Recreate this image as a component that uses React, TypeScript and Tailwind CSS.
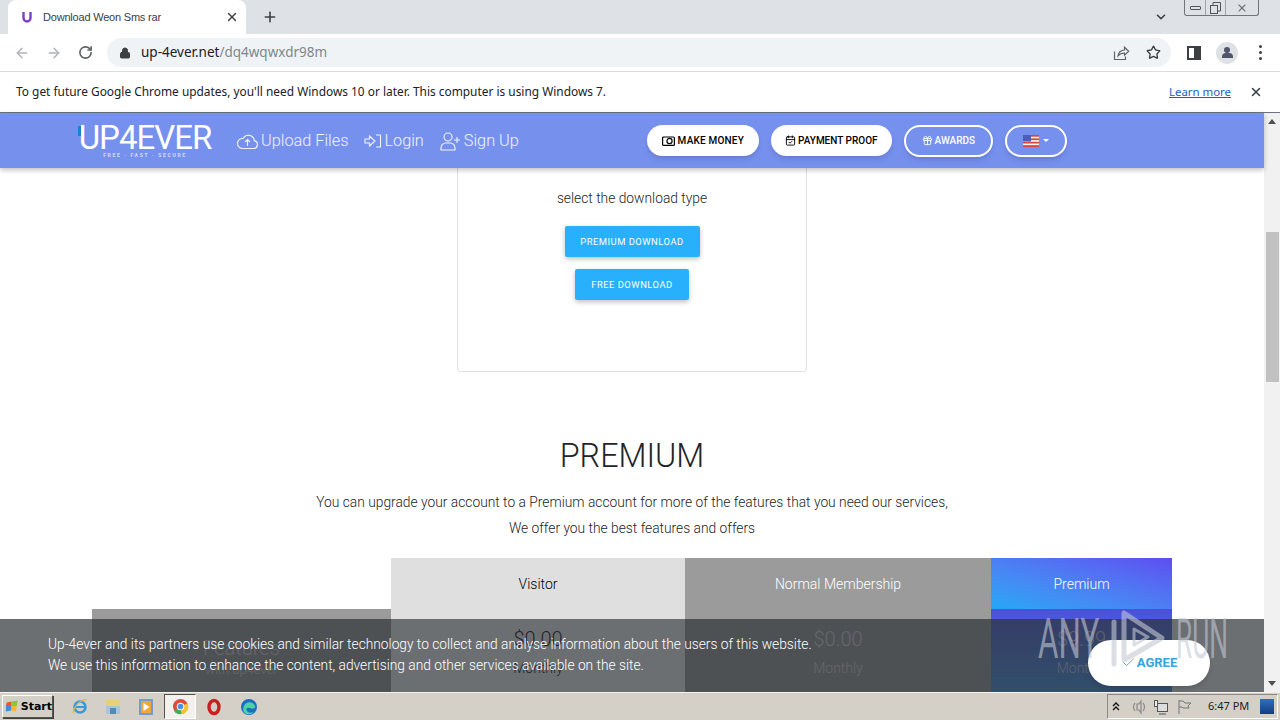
import {
  ArrowLeft,
  ArrowRight,
  RotateCw,
  Lock,
  Star,
  X,
  Plus,
  ChevronDown,
  CalendarCheck,
  Gift,
  Check,
} from "lucide-react";

const roboto = { fontFamily: "Roboto, Arial, sans-serif" };
const uiFont = { fontFamily: "'Noto Sans', sans-serif" };

function Flag() {
  return (
    <svg width="16" height="12" viewBox="0 0 16 12">
      <rect width="16" height="12" fill="#f3f3f3" />
      <rect y="0" width="16" height="1.7" fill="#d8443c" />
      <rect y="3.4" width="16" height="1.7" fill="#d8443c" />
      <rect y="6.8" width="16" height="1.7" fill="#d8443c" />
      <rect y="10.2" width="16" height="1.8" fill="#d8443c" />
      <rect width="8" height="6.5" fill="#4a5fb5" />
    </svg>
  );
}

function Browser() {
  return (
    <>
      {/* tab strip */}
      <div className="h-[34px] bg-[#dee1e6] flex items-end shrink-0">
        <div className="ml-[8px] w-[238px] h-[34px] bg-white rounded-t-lg flex items-center pl-[13px] pr-[7px]">
          <svg width="12" height="14" viewBox="0 0 12 14" fill="none">
            <path d="M2.5 2v6a3.5 3.5 0 0 0 7 0V2" stroke="#7b3fc4" strokeWidth="2.4" />
          </svg>
          <span className="ml-[10px] flex-1 text-[11px] tracking-[-0.2px] text-[#3c4043] leading-none" style={{ fontFamily: "'Liberation Sans', sans-serif" }}>
            Download Weon Sms rar
          </span>
          <X className="w-[14px] h-[14px] text-[#3c4043]" strokeWidth={2.4} />
        </div>
        <Plus className="ml-[16px] mb-[9px] w-[16px] h-[16px] text-[#3c4043]" strokeWidth={2.4} />
        <div className="flex-1" />
        <ChevronDown className="mb-[10px] mr-[16px] w-[14px] h-[14px] text-[#3c4043]" strokeWidth={2.8} />
        <div className="self-start mr-[21px] w-[75px] h-[16px] border border-t-0 border-[#70757c] rounded-b-[3px] flex items-center">
          <div className="w-[21px] flex justify-center border-r border-[#a0a4aa] h-full items-center">
            <div className="w-[11px] h-[4px] border border-[#50555c] rounded-[1px]" />
          </div>
          <div className="w-[20px] flex justify-center border-r border-[#a0a4aa] h-full items-center">
            <svg width="11" height="12" viewBox="0 0 11 12" fill="none" stroke="#50555c">
              <rect x="0.5" y="3.5" width="7" height="8" />
              <path d="M3 3V.5h7.5V9H8" />
            </svg>
          </div>
          <X className="ml-[10px] w-[12px] h-[12px] text-[#70757c]" strokeWidth={2.2} />
        </div>
      </div>

      {/* toolbar */}
      <div className="h-[38px] bg-white border-b border-[#dadce0] flex items-center shrink-0">
        <ArrowLeft className="ml-[14px] w-[16px] h-[16px] text-[#b0b3b8]" strokeWidth={2.2} />
        <ArrowRight className="ml-[16px] w-[16px] h-[16px] text-[#b0b3b8]" strokeWidth={2.2} />
        <RotateCw className="ml-[16px] w-[15px] h-[15px] text-[#5f6368]" strokeWidth={2.6} />
        <div className="ml-[14px] w-[1064px] h-[29px] bg-[#f0f3f6] rounded-full flex items-center pl-[12px] pr-[10px]">
          <Lock className="w-[12px] h-[12px] text-[#3c4043] fill-[#3c4043]" />
          <span className="ml-[10px] flex-1 text-[13.5px] text-[#80868b] leading-none" style={uiFont}>
            <span className="text-[#202124]">up-4ever.net</span>/dq4wqwxdr98m
          </span>
          <svg width="17" height="16" viewBox="0 0 17 16" fill="none" stroke="#5f6368" strokeWidth="1.2">
            <path d="M1.5 6.5v8h11v-3" />
            <path d="M5 11c0-3.5 3-6 6.5-6V2.2l4.2 4-4.2 4V8C8.500 8 6.500 9 5 11z" />
          </svg>
          <Star className="ml-[16px] w-[15px] h-[15px] text-[#3c4043]" strokeWidth={2.2} />
        </div>
        <div className="ml-[16px] w-[14px] h-[14px] border-2 border-[#3c4043] border-r-[7px]" />
        <div className="ml-[15px] w-[22px] h-[22px] rounded-full bg-[#dfe1e5] flex flex-col items-center justify-center">
          <div className="w-[6px] h-[6px] rounded-full bg-[#50566a]" />
          <div className="w-[11px] h-[5px] rounded-t-[4px] bg-[#50566a]" />
        </div>
        <div className="ml-[21px] flex flex-col gap-[3px]">
          <div className="w-[3px] h-[3px] rounded-full bg-[#3c4043]" />
          <div className="w-[3px] h-[3px] rounded-full bg-[#3c4043]" />
          <div className="w-[3px] h-[3px] rounded-full bg-[#3c4043]" />
        </div>
      </div>

      {/* infobar */}
      <div className="h-[41px] bg-white border-b border-[#6b7280] flex items-center pl-[16px] pr-[17px] shrink-0">
        <span className="flex-1 text-[11.9px] text-[#202124]" style={uiFont}>
          To get future Google Chrome updates, you'll need Windows 10 or later. This computer is using Windows 7.
        </span>
        <span className="text-[11.4px] text-[#1a62c9] underline" style={uiFont}>
          Learn more
        </span>
        <X className="ml-[18px] w-[14px] h-[14px] text-[#3c4043]" strokeWidth={2.6} />
      </div>
    </>
  );
}

function NavBar() {
  return (
    <div className="relative z-10 h-[55px] bg-[#7690ee] shadow-[0_2px_5px_rgba(0,0,0,0.25)] flex items-center pl-[78px] text-white shrink-0" style={roboto}>
      <div className="relative w-[134px] flex flex-col items-center">
        <span className="absolute left-0 top-[2px] w-[3px] h-[10px] bg-[#1f7fd0]" />
        <span className="text-[33px] font-normal leading-[28px] tracking-[-1px] whitespace-nowrap">UP4EVER</span>
        <span className="text-[5px] font-bold leading-[6px] tracking-[1.7px] text-white/70 whitespace-nowrap">FREE · FAST · SECURE</span>
      </div>
      <div className="ml-[25px] pt-[1px] flex items-center text-[16.3px] font-light text-white/90">
        <span className="flex items-center gap-[3px]">
          <svg width="21" height="18" viewBox="0 0 21 18" fill="none" stroke="currentColor" strokeWidth="1.1">
            <path d="M5 16.500h11.500a4 4 0 0 0 .8-7.900A6 6 0 0 0 6 6.500a5 5 0 0 0-1 10z" />
            <path d="M10.500 14V8M8 10l2.500-2.500L13 10" />
          </svg>
          Upload Files
        </span>
        <span className="ml-[16px] flex items-center gap-[2px]">
          <svg width="18" height="16" viewBox="0 0 18 16" fill="none" stroke="currentColor" strokeWidth="1.1">
            <path d="M1 6h4.500V3l5.500 5-5.500 5v-3H1z" />
            <path d="M12 2h4.500v12H12" />
          </svg>
          Login
        </span>
        <span className="ml-[16px] flex items-center gap-[3px]">
          <svg width="21" height="19" viewBox="0 0 21 19" fill="none" stroke="currentColor" strokeWidth="1.1">
            <circle cx="8" cy="5" r="4" />
            <path d="M1 18v-2a5 5 0 0 1 5-5h4a5 5 0 0 1 5 5v2z" />
            <path d="M17 5v6M14 8h6" />
          </svg>
          Sign Up
        </span>
      </div>
      <div className="ml-[128px] flex items-center gap-[12px] text-[10px] font-medium">
        <span className="h-[31px] w-[112px] rounded-full bg-white text-black flex items-center justify-center gap-[3px] shadow-md tracking-[0.2px]">
          <svg width="13" height="11" viewBox="0 0 13 11" fill="none" stroke="currentColor" strokeWidth="1.2">
            <rect x="0.6" y="2" width="11.800" height="8.400" rx="1" />
            <circle cx="7.500" cy="6" r="2.600" />
          </svg>
          MAKE MONEY
        </span>
        <span className="h-[31px] w-[121px] rounded-full bg-white text-black flex items-center justify-center gap-[2px] shadow-md">
          <CalendarCheck className="w-[11px] h-[11px]" />
          PAYMENT PROOF
        </span>
        <span className="h-[32px] w-[89px] rounded-full border-2 border-white text-white flex items-center justify-center gap-[2px] shadow-md">
          <Gift className="w-[11px] h-[11px]" />
          AWARDS
        </span>
        <span className="h-[32px] w-[62px] rounded-full border-2 border-white flex items-center justify-center gap-[4px] shadow-md">
          <Flag />
          <span className="w-0 h-0 border-x-[3px] border-x-transparent border-t-[3px] border-t-white" />
        </span>
      </div>
    </div>
  );
}

function PageBody() {
  return (
    <div className="flex-1 bg-white text-[#212529] overflow-hidden" style={roboto}>
      <div className="ml-[457px] w-[350px] h-[204px] border border-t-0 border-[#e0e0e0] rounded-b-[4px] flex flex-col items-center pt-[21px]">
        <p className="text-[13.8px] font-light leading-[18px]">select the download type</p>
        <button className="mt-[19px] w-[135px] h-[31px] pt-[1px] bg-[#29b0fc] text-white text-[9.4px] tracking-[0.5px] rounded-[2px] shadow-[0_2px_5px_rgba(0,0,0,0.25)]">
          PREMIUM DOWNLOAD
        </button>
        <button className="mt-[12px] w-[114px] h-[31px] pt-[1px] bg-[#29b0fc] text-white text-[9.4px] tracking-[0.5px] rounded-[2px] shadow-[0_2px_5px_rgba(0,0,0,0.25)]">
          FREE DOWNLOAD
        </button>
      </div>

      <h2 className="mt-[62px] text-center text-[32.3px] font-light leading-[44px]">PREMIUM</h2>
      <p className="mt-[11px] text-center text-[13.8px] font-light leading-[26px]">
        You can upgrade your account to a Premium account for more of the features that you need our services,
        <br />
        We offer you the best features and offers
      </p>

      <div className="mt-[17px] ml-[92px] w-[1080px] grid grid-cols-[299px_294px_306px_181px] h-[134px] text-[14px]">
        <div className="mt-[51px] bg-[#9b9b9b] text-center text-white/70 pt-[27px]">
          <div className="text-[20px] font-light leading-[24px]">Features</div>
          <div className="text-[13px] font-light">with up4ever</div>
        </div>
        <div className="text-center">
          <div className="h-[61px] pb-[8px] bg-[#dfdfdf] flex items-center justify-center text-black font-light">Visitor</div>
          <div className="pt-[8px] text-[20px] font-light leading-[24px] text-black">$0.00</div>
          <div className="pt-[7px] text-[14px] font-light text-black">Monthly</div>
        </div>
        <div className="text-center">
          <div className="h-[51px] pt-[2px] bg-[#9b9b9b] flex items-center justify-center text-white font-light">Normal Membership</div>
          <div className="h-[83px] bg-[#9b9b9b] text-white/70 font-light">
            <div className="pt-[18px] text-[20px] leading-[24px]">$0.00</div>
            <div className="pt-[7px] text-[14px]">Monthly</div>
          </div>
        </div>
        <div className="text-center">
          <div className="h-[51px] pt-[2px] bg-gradient-to-tr from-[#21a8f5] to-[#5c4df0] flex items-center justify-center text-white font-light">
            Premium
          </div>
          <div className="h-[83px] bg-gradient-to-b from-[#4a50d8] to-[#3a92e8] text-white/70 font-light">
            <div className="pt-[18px] text-[20px] leading-[24px]">$9.99</div>
            <div className="pt-[7px] text-[14px]">Monthly</div>
          </div>
        </div>
      </div>
    </div>
  );
}

function CookieBar() {
  return (
    <div className="absolute left-0 bottom-0 z-20 w-[1264px] h-[73px] bg-[rgba(45,50,54,0.7)] text-white font-light text-[13.75px] leading-[21px] pl-[48px] pt-[15px]" style={roboto}>
      <p>Up-4ever and its partners use cookies and similar technology to collect and analyse information about the users of this website.</p>
      <p>We use this information to enhance the content, advertising and other services available on the site.</p>
      <button className="absolute left-[1088px] top-[21px] w-[122px] h-[46px] rounded-full bg-white shadow-md flex items-center justify-center gap-[1px] text-[#35a5e0] text-[13px] font-bold pb-[2px]">
        <Check className="w-[15px] h-[15px]" strokeWidth={1.4} />
        AGREE
      </button>
    </div>
  );
}

function Watermark() {
  return (
    <div className="absolute left-[1038px] top-[497px] z-30 h-[58px] flex items-center text-[rgba(195,200,212,0.6)] text-[56px] leading-[58px] font-normal" style={roboto}>
      <span className="w-[70px] whitespace-nowrap scale-x-[0.56] origin-left">ANY</span>
      <svg className="ml-[2px]" width="56" height="58" viewBox="0 0 56 58" fill="none" stroke="currentColor" strokeWidth="5" strokeLinejoin="round" strokeLinecap="round">
        <path d="M4 12v42" />
        <path d="M14 3v47l38-22z" />
        <path d="M24 19v16l14-8z" strokeWidth="3" />
      </svg>
      <span className="ml-[10px] w-[56px] whitespace-nowrap scale-x-[0.47] origin-left">RUN</span>
    </div>
  );
}

function Scrollbar() {
  return (
    <div className="w-[16px] bg-[#f1f1f1] flex flex-col items-center shrink-0">
      <span className="mt-[6px] w-0 h-0 border-x-[4px] border-x-transparent border-b-[5px] border-b-[#505050]" />
      <div className="mt-[108px] w-[13px] h-[150px] bg-[#c1c1c1]" />
      <div className="flex-1" />
      <span className="mb-[6px] w-0 h-0 border-x-[4px] border-x-transparent border-t-[5px] border-t-[#505050]" />
    </div>
  );
}

function Taskbar() {
  return (
    <div className="h-[28px] bg-[#d4d0c8] border-t border-[#f4f2ee] flex items-center shrink-0">
      <div className="ml-[2px] w-[51px] h-[23px] border border-[#55524c] border-l-white border-t-white bg-[#d4d0c8] flex items-center pl-[2px] gap-[2px] shadow-[1px_1px_0_#404040]">
        <svg width="15" height="15" viewBox="0 0 15 15">
          <path d="M2 3l5-1v5H1z" fill="#e8562a" />
          <path d="M7 2l7-1-1 6H7z" fill="#8cc63f" />
          <path d="M1 7h6v5l-6 1z" fill="#3a8fe0" />
          <path d="M7 7h6l-1 6-5-1z" fill="#f5b82e" />
        </svg>
        <span className="text-[11px] font-bold text-black leading-none" style={{ fontFamily: "'DejaVu Sans', sans-serif" }}>
          Start
        </span>
      </div>
      {/* IE */}
      <svg className="ml-[18px]" width="18" height="18" viewBox="0 0 18 18" fill="none">
        <circle cx="9" cy="9" r="5.500" stroke="#3a9ad9" strokeWidth="2.600" />
        <path d="M4 9h10" stroke="#3a9ad9" strokeWidth="2" />
        <path d="M2 15C4 6 12 0 16 2" stroke="#e5b83a" strokeWidth="1.200" />
      </svg>
      {/* explorer */}
      <svg className="ml-[16px]" width="16" height="18" viewBox="0 0 16 18">
        <rect x="1" y="2" width="14" height="14" fill="#e8cf7a" />
        <rect x="1" y="8" width="14" height="8" fill="#a9c6d8" />
        <rect x="5" y="10" width="6" height="6" fill="#4f8db8" />
      </svg>
      {/* media player */}
      <svg className="ml-[17px]" width="16" height="18" viewBox="0 0 16 18">
        <rect x="1" y="1" width="14" height="16" fill="#6e9ecf" />
        <rect x="3" y="3" width="10" height="12" fill="#f0a83a" />
        <path d="M5.500 5l6 4-6 4z" fill="#fff" />
      </svg>
      <div className="ml-[10px] w-[32px] h-[25px] border border-[#55524c] border-r-white border-b-white bg-[#f3f1ed] flex items-center justify-center">
        <svg width="17" height="17" viewBox="0 0 18 18">
          <circle cx="9" cy="9" r="8" fill="#dd4b3e" />
          <path d="M9 9L2 13.500A8 8 0 0 0 10 17z" fill="#4aa85a" />
          <path d="M9 9l1 8A8 8 0 0 0 16.500 5.500z" fill="#f5c52e" />
          <circle cx="9" cy="9" r="4" fill="#fff" />
          <circle cx="9" cy="9" r="3" fill="#4a8fe8" />
        </svg>
      </div>
      <svg className="ml-[10px]" width="16" height="18" viewBox="0 0 16 18" fill="none">
        <ellipse cx="8" cy="9" rx="5" ry="6.500" stroke="#c8201f" strokeWidth="3.400" />
      </svg>
      <svg className="ml-[18px]" width="18" height="18" viewBox="0 0 18 18">
        <circle cx="9" cy="9" r="8" fill="#1b6fc2" />
        <path d="M4 8c2-5 9-5 11 0 1 3-3 3-5 2-2-1-5 0-3 3 1 2 4 2 7 1-3 3-8 3-10 0-1-2-1-4 0-6z" fill="#4fd3a5" />
      </svg>
      <div className="flex-1" />
      <div className="mr-[2px] w-[171px] h-[25px] border border-[#8d8a84] border-r-white border-b-white flex items-center pl-[4px] text-[#333]">
        <svg width="8" height="10" viewBox="0 0 8 10" fill="none" stroke="#111" strokeWidth="1.300">
          <path d="M1 4l3-3 3 3M1 8l3-3 3 3" />
        </svg>
        <svg className="ml-[10px]" width="18" height="16" viewBox="0 0 18 16" fill="none" stroke="#8a8a8a" strokeWidth="1.200">
          <path d="M7 5h2l2-3v12l-2-3H7z" />
          <path d="M13 4c2 2 2 6 0 8M5 4c-2 2-2 6 0 8" />
        </svg>
        <svg className="ml-[5px]" width="16" height="16" viewBox="0 0 16 16" fill="none" stroke="#555">
          <rect x="4.500" y="4.500" width="10" height="8" fill="#ddd" />
          <rect x="1.500" y="1.500" width="3" height="6" fill="#eee" />
          <path d="M6 15h7" />
        </svg>
        <svg className="ml-[8px]" width="15" height="16" viewBox="0 0 15 16" fill="none" stroke="#777">
          <path d="M2 1v14M2 2h4l2 2h6l-3 3 1 2H6L5 8H2" />
        </svg>
        <span className="ml-[16px] text-[11px] text-[#222]" style={uiFont}>
          6:47 PM
        </span>
        <div className="ml-[11px] w-[14px] h-[15px] bg-gradient-to-b from-[#2f6fc0] to-[#123f80]" />
      </div>
    </div>
  );
}

export default function App() {
  return (
    <div className="relative w-[1280px] h-[720px] overflow-hidden flex flex-col bg-white">
      <Browser />
      <div className="relative flex-1 flex min-h-0">
        <div className="relative flex-1 flex flex-col min-w-0">
          <NavBar />
          <PageBody />
          <CookieBar />
          <Watermark />
        </div>
        <Scrollbar />
      </div>
      <Taskbar />
    </div>
  );
}
